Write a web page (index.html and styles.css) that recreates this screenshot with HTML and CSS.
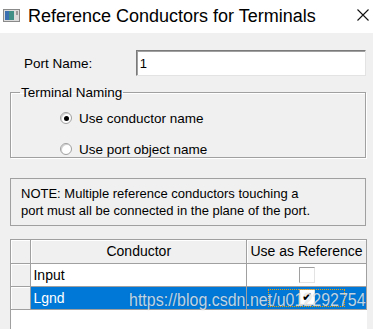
FILE: index.html
```html
<!DOCTYPE html>
<html lang="en">
<head>
    <meta charset="UTF-8">
    <title>Reference Conductors for Terminals</title>
    <link rel="stylesheet" href="styles.css">
</head>
<body>
    <div class="titlebar">
        <svg class="appicon" width="17" height="13" viewBox="0 0 17 13">
            <rect x="0.5" y="0.5" width="16" height="12" fill="#dcdcdc" stroke="#8a8a8a"/>
            <rect x="2" y="2" width="9" height="9" fill="#3f8f86"/>
            <rect x="2" y="2" width="4" height="9" fill="#3a6fb0"/>
            <rect x="13" y="2" width="2" height="4" fill="#9a9a9a"/>
        </svg>
        <span class="title">Reference Conductors for Terminals</span>
        <svg class="close" width="12" height="12" viewBox="0 0 12 12">
            <path d="M0.5 0.5 L11.5 11.5 M11.5 0.5 L0.5 11.5" stroke="#111" stroke-width="1.1" fill="none"/>
        </svg>
    </div>

    <div class="dialog">
        <div class="port-row">
            <label for="port">Port Name:</label>
            <input type="text" id="port" value="1">
        </div>

        <fieldset class="group">
            <legend>Terminal Naming</legend>
            <div class="radio first"><span class="dot on"></span>Use conductor name</div>
            <div class="radio"><span class="dot"></span>Use port object name</div>
        </fieldset>

        <div class="note">
            NOTE: Multiple reference conductors touching a<br>
            port must all be connected in the plane of the port.
        </div>

        <div class="grid">
            <table>
                <tr class="head">
                    <th class="rh"></th>
                    <th class="c1">Conductor</th>
                    <th class="c2">Use as Reference</th>
                </tr>
                <tr>
                    <td class="rh"></td>
                    <td>Input</td>
                    <td class="chk"><span class="box"></span></td>
                </tr>
                <tr class="sel">
                    <td class="rh"></td>
                    <td>Lgnd</td>
                    <td class="chk"><span class="focus"><span class="box">&#10004;</span></span></td>
                </tr>
            </table>
            <div class="watermark">https://blog.csdn.net/u012292754</div>
        </div>
    </div>
</body>
</html>
```

FILE: styles.css
```css
body{
    margin: 0;
    background: #f0f0f0;
    font-family: "Liberation Sans", Arial, sans-serif;
    font-size: 13px;
    color: #000;
    overflow: hidden;
}

.titlebar{
    height: 33px;
    background: #fff;
    display: flex;
    align-items: center;
}
.appicon{
    margin-left: 3px;
    margin-top: -2px;
}
.title{
    margin-left: 8px;
    font-size: 18px;
    color: #000;
    flex: 1;
    margin-top: -1px;
}
.close{
    margin-right: 4px;
    margin-top: -4px;
}

.dialog{
    padding: 0 7px 0 10px;
}

.port-row{
    display: flex;
    align-items: center;
    margin-top: 17px;
    height: 26px;
}
.port-row label{
    width: 112px;
    padding-left: 14px;
    font-size: 13.5px;
}
.port-row input{
    width: 231px;
    height: 26px;
    box-sizing: border-box;
    margin: 0;
    border: 1px solid;
    border-color: #7a7a7a #e3e3e3 #e3e3e3 #7a7a7a;
    box-shadow: inset 1px 1px 0 #a0a0a0;
    background: #fff;
    font-family: inherit;
    font-size: 13px;
    padding: 0 3px;
    outline: none;
}

.group{
    margin: 9px 0 0 0;
    padding: 0;
    border: 1px solid #a0a0a0;
    box-shadow: inset 1px 1px 0 #fff, 1px 1px 0 #fff;
}
.group legend{
    padding: 0 1px;
    margin-left: 9px;
    line-height: 15px;
    font-size: 13.5px;
}
.radio{
    display: flex;
    align-items: center;
    height: 16px;
    padding-left: 49px;
    margin-top: 15px;
    font-size: 13.5px;
}
.radio.first{
    margin-top: 10px;
}
.dot{
    width: 12px;
    height: 12px;
    box-sizing: border-box;
    border-radius: 50%;
    border: 1px solid #a0a0a0;
    background: #fff;
    box-shadow: inset 1px 1px 0 #d0d0d0;
    margin-right: 7px;
    display: flex;
    align-items: center;
    justify-content: center;
}
.dot.on::after{
    content: "";
    width: 5px;
    height: 5px;
    border-radius: 50%;
    background: #000;
}

.note{
    margin-top: 20px;
    height: 48px;
    box-sizing: border-box;
    border: 1px solid #a0a0a0;
    padding: 6px 10px;
    line-height: 17px;
}

.grid{
    position: relative;
    margin-top: 13px;
    margin-right: -1px;
    height: 100px;
    border: 1px solid #a0a0a0;
    border-right: none;
    border-bottom: none;
    background: #fff;
    overflow: hidden;
}
.grid table{
    border-collapse: collapse;
    width: 100%;
}
.grid th,.grid td{
    height: 23px;
    box-sizing: border-box;
    padding: 0 2px;
    border: 1px solid #a0a0a0;
    font-weight: normal;
}
.grid tr:first-child th{
    border-top: none;
}
.grid th:first-child,.grid td:first-child{
    border-left: none;
}
.grid th{
    background: #f0f0f0;
    box-shadow: inset 1px 1px 0 #fff;
    font-size: 14px;
}
.grid .rh{
    width: 20px;
    background: #f0f0f0;
    box-shadow: inset 1px 1px 0 #fff;
}
.grid .c1{
    width: 216px;
}
.grid .c2{
    width: 120px;
}
.grid td{
    font-size: 14px;
    background: #fff;
}
.grid tr.sel td{
    background: #0078d7;
    color: #fff;
}
.grid tr.sel td.rh{
    background: #f0f0f0;
}
.chk{
    text-align: center;
}
.box{
    display: inline-block;
    vertical-align: middle;
    width: 16px;
    height: 16px;
    box-sizing: border-box;
    border: 1px solid #a0a0a0;
    border-right-color: #e3e3e3;
    border-bottom-color: #e3e3e3;
    background: #fff;
    color: #000;
    font-size: 12px;
    line-height: 14px;
    text-align: center;
}
.focus{
    display: inline-block;
    width: 77px;
    height: 18px;
    box-sizing: border-box;
    border: 1px dotted #000;
    outline: 1px dotted #f0a000;
    outline-offset: -1px;
    line-height: 14px;
}
.focus .box{
    height: 16px;
    margin-top: -1px;
}

.watermark{
    position: absolute;
    left: 118px;
    top: 50px;
    font-size: 16px;
    transform: scaleY(1.15);
    transform-origin: left top;
    color: rgba(255,255,255,0.75);
    text-shadow: 0 0 1px rgba(0,0,0,0.3);
    white-space: nowrap;
}
```
